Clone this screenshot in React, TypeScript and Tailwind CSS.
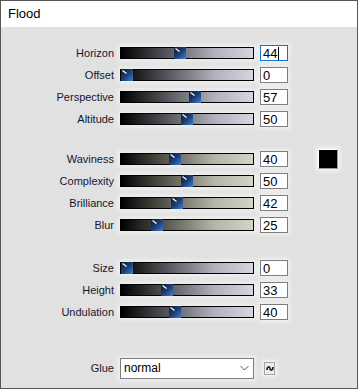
import React from "react";

type SliderRow = {
  label: string;
  value: number;
  focused?: boolean;
};

const FONT = { fontFamily: '"Liberation Sans", Arial, sans-serif' };
const NUM_FONT = {
  fontFamily: '"Liberation Sans Narrow", "Liberation Sans", Arial, sans-serif'
};

const groupA: SliderRow[] = [
  { label: "Horizon", value: 44, focused: true },
  { label: "Offset", value: 0 },
  { label: "Perspective", value: 57 },
  { label: "Altitude", value: 50 }
];

const groupB: SliderRow[] = [
  { label: "Waviness", value: 40 },
  { label: "Complexity", value: 50 },
  { label: "Brilliance", value: 42 },
  { label: "Blur", value: 25 }
];

const groupC: SliderRow[] = [
  { label: "Size", value: 0 },
  { label: "Height", value: 33 },
  { label: "Undulation", value: 40 }
];

const Thumb = ({ value }: { value: number }) => (
  <svg
    className="absolute top-[-1px]"
    style={{ left: (value / 100) * 120 }}
    width="12"
    height="12"
    viewBox="0 0 12 12"
  >
    <defs>
      <linearGradient id="thumbGrad" x1="0" y1="0" x2="1" y2="1">
        <stop offset="0" stopColor="#0b1830" />
        <stop offset="0.5" stopColor="#1d3d72" />
        <stop offset="1" stopColor="#3f7fd6" />
      </linearGradient>
    </defs>
    <rect x="0" y="0" width="12" height="12" fill="url(#thumbGrad)" />
    <path d="M1.5 1.5 L5.5 4.5" stroke="#ffffff" strokeWidth="1.2" />
  </svg>
);

const Track = ({ value, tone }: { value: number; tone: "cool" | "warm" }) => (
  <div
    className={`relative ml-[6px] h-[12px] w-[134px] border border-black shadow-[0_0_5px_2px_rgba(255,255,255,0.55)] ${
      tone === "warm"
        ? "bg-[linear-gradient(to_right,#000000,#5a5a52_35%,#b4b4a6_70%,#d4d4c4)]"
        : "bg-[linear-gradient(to_right,#000000,#55555c_35%,#b0b0bc_70%,#d6d6e0)]"
    }`}
  >
    <Thumb value={value} />
  </div>
);

const NumberBox = ({ value, focused }: { value: number; focused?: boolean }) => (
  <div
    className={`ml-[6px] flex h-[16px] w-[28px] items-center bg-white pl-[2px] text-[13px] leading-none text-black shadow-[0_0_5px_2px_rgba(255,255,255,0.55)] ${
      focused ? "border border-[#0a74d4]" : "border border-[#7c7c7c]"
    }`}
    style={NUM_FONT}
  >
    <span>{value}</span>
    {focused && <span className="ml-px h-[13px] w-px bg-black" />}
  </div>
);

const Row = ({
  row,
  tone,
  extra
}: {
  row: SliderRow;
  tone: "cool" | "warm";
  extra?: React.ReactNode;
}) => (
  <div className="flex h-[22px] items-center">
    <div className="w-[113px] text-right text-[11px] text-[#151530]">
      {row.label}
    </div>
    <Track value={row.value} tone={tone} />
    <NumberBox value={row.value} focused={row.focused} />
    {extra}
  </div>
);

const Swatch = () => (
  <div className="ml-[30px] h-[20px] w-[20px] border border-t-white border-l-white border-r-[#9a9a9a] border-b-[#9a9a9a] bg-black shadow-[0_0_4px_2px_rgba(255,255,255,0.7)]" />
);

const App = () => {
  return (
    <div
      className="flex h-[389px] w-[358px] flex-col border border-[#555555] bg-[#e1e1e1]"
      style={FONT}
    >
      <div className="flex h-[26px] shrink-0 items-center bg-white pl-[7px] text-[13px] text-black">
        Flood
      </div>

      <div className="flex flex-col pt-[15px]">
        <div className="flex flex-col">
          {groupA.map((r) => (
            <Row key={r.label} row={r} tone="cool" />
          ))}
        </div>

        <div className="mt-[18px] flex flex-col">
          {groupB.map((r, i) => (
            <Row
              key={r.label}
              row={r}
              tone="warm"
              extra={i === 0 ? <Swatch /> : undefined}
            />
          ))}
        </div>

        <div className="mt-[21px] flex flex-col">
          {groupC.map((r) => (
            <Row key={r.label} row={r} tone="cool" />
          ))}
        </div>

        <div className="mt-[34px] flex h-[22px] items-center">
          <div className="w-[113px] text-right text-[11px] text-[#1b1b1b]">
            Glue
          </div>
          <div className="ml-[6px] flex h-[21px] w-[134px] items-center justify-between border border-[#7c7c7c] bg-white pl-[3px] pr-[4px] text-[12px] text-black shadow-[0_0_5px_2px_rgba(255,255,255,0.55)]">
            <span>normal</span>
            <svg width="9" height="6" viewBox="0 0 9 6">
              <path
                d="M0.5 1 L4.5 5 L8.5 1"
                fill="none"
                stroke="#555555"
                strokeWidth="1"
              />
            </svg>
          </div>
          <div className="ml-[10px] flex h-[13px] w-[11px] items-center justify-center border border-[#a6a6a6] bg-[#ececec] shadow-[0_0_4px_2px_rgba(255,255,255,0.6)]">
            <svg width="8" height="7" viewBox="0 0 8 7">
              <path
                d="M1 5 C1 1.2, 4 1.2, 4 3.5 C4 5.8, 7 5.8, 7 2"
                fill="none"
                stroke="#1a1a1a"
                strokeWidth="1.6"
              />
            </svg>
          </div>
        </div>
      </div>
    </div>
  );
};

export default App;
